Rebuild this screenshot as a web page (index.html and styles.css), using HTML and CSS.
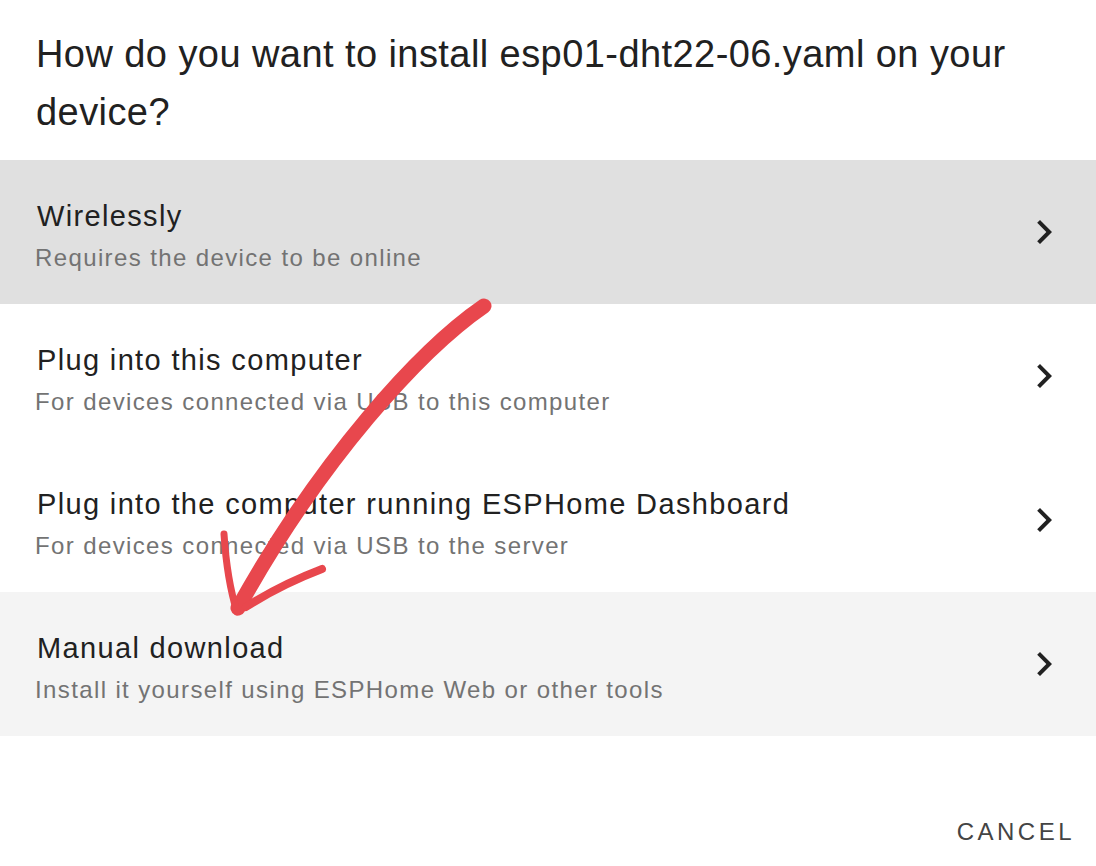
FILE: index.html
```html
<!DOCTYPE html>
<html>
<head>
<meta charset="utf-8">
<link rel="stylesheet" href="styles.css">
</head>
<body>
<div class="dialog">
  <h1 class="heading">How do you want to install esp01-dht22-06.yaml on your device?</h1>
  <div class="list">
    <div class="item item-active">
      <div class="text">
        <div class="primary">Wirelessly</div>
        <div class="secondary">Requires the device to be online</div>
      </div>
      <svg class="chevron" viewBox="0 0 24 24"><path d="M10 6L8.59 7.41 13.17 12l-4.58 4.59L10 18l6-6z"/></svg>
    </div>
    <div class="item">
      <div class="text">
        <div class="primary">Plug into this computer</div>
        <div class="secondary">For devices connected via USB to this computer</div>
      </div>
      <svg class="chevron" viewBox="0 0 24 24"><path d="M10 6L8.59 7.41 13.17 12l-4.58 4.59L10 18l6-6z"/></svg>
    </div>
    <div class="item">
      <div class="text">
        <div class="primary">Plug into the computer running ESPHome Dashboard</div>
        <div class="secondary">For devices connected via USB to the server</div>
      </div>
      <svg class="chevron" viewBox="0 0 24 24"><path d="M10 6L8.59 7.41 13.17 12l-4.58 4.59L10 18l6-6z"/></svg>
    </div>
    <div class="item item-hover">
      <div class="text">
        <div class="primary">Manual download</div>
        <div class="secondary">Install it yourself using ESPHome Web or other tools</div>
      </div>
      <svg class="chevron" viewBox="0 0 24 24"><path d="M10 6L8.59 7.41 13.17 12l-4.58 4.59L10 18l6-6z"/></svg>
    </div>
  </div>
  <div class="actions">
    <button class="btn">Cancel</button>
  </div>
  <svg class="annotation" viewBox="0 0 1096 866" width="1096" height="866">
    <path class="stroke-main" d="M484,306 C420,350 320,460 238,608"/>
    <path class="stroke-head" d="M224,534 Q227,580 237,612"/>
    <path class="stroke-head2" d="M322,569 Q280,585 246,607"/>
  </svg>
</div>
</body>
</html>
```

FILE: styles.css
```css
html, body {
  margin: 0;
  padding: 0;
  background: #ffffff;
}
body {
  font-family: "Liberation Sans", Arial, sans-serif;
  color: #212121;
}
.dialog {
  position: relative;
  width: 1096px;
  height: 866px;
  overflow: hidden;
}
.heading {
  margin: 0;
  padding: 25px 40px 19px 36px;
  font-size: 38px;
  font-weight: 400;
  line-height: 58px;
  letter-spacing: 0.43px;
  color: #212121;
  height: 116px;
}
.list {
  display: flex;
  flex-direction: column;
}
.item {
  height: 144px;
  display: flex;
  align-items: center;
  justify-content: space-between;
  padding: 0 28px 0 36px;
  box-sizing: border-box;
}
.item-active {
  background: #e0e0e0;
}
.item-hover {
  background: #f4f4f4;
}
.text {
  align-self: flex-start;
  padding-top: 35px;
}
.primary {
  font-size: 29px;
  line-height: 42px;
  letter-spacing: 1.35px;
  color: #212121;
  padding-left: 1px;
}
.secondary {
  font-size: 24px;
  line-height: 40px;
  letter-spacing: 1.38px;
  color: #737373;
  margin-left: -1px;
  margin-top: 1px;
}
.chevron {
  width: 48px;
  height: 48px;
  fill: #212121;
  flex: none;
}
.actions {
  display: flex;
  justify-content: flex-end;
  padding: 74px 21px 0 0;
}
.btn {
  border: none;
  background: none;
  font-family: "Liberation Sans", Arial, sans-serif;
  font-size: 24px;
  letter-spacing: 3.5px;
  text-transform: uppercase;
  color: #444444;
  padding: 8px 0;
  margin: 0;
}
.annotation {
  position: absolute;
  top: 0;
  left: 0;
  pointer-events: none;
}
.annotation path {
  fill: none;
  stroke: #e8474d;
  stroke-linecap: round;
  stroke-linejoin: round;
}
.stroke-main {
  stroke-width: 15px;
}
.stroke-head {
  stroke-width: 7px;
}
.stroke-head2 {
  stroke-width: 8px;
}
```
